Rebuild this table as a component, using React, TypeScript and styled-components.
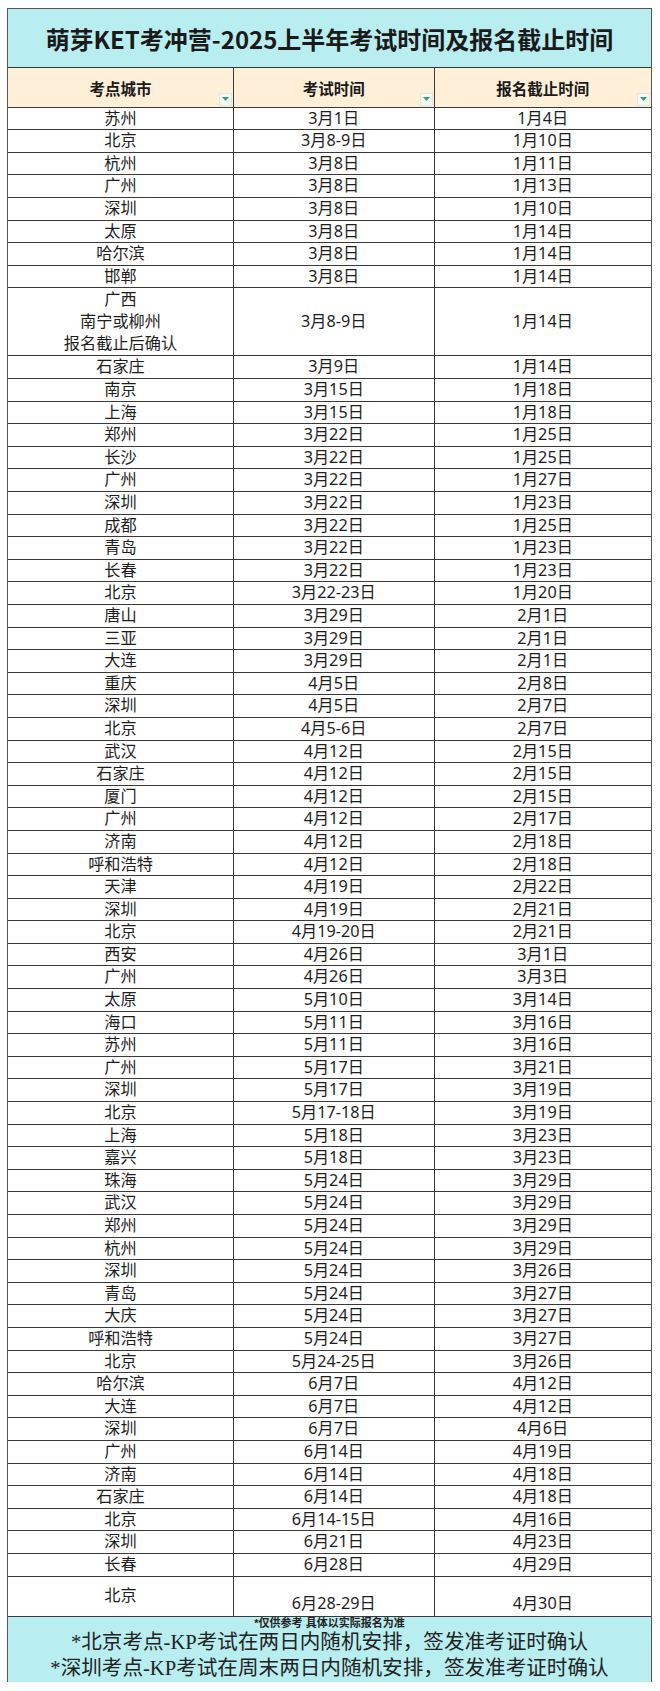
import React from "react";
import styled, { createGlobalStyle } from "styled-components";

const GlobalStyle = createGlobalStyle`
  html, body { margin: 0; padding: 0; background: #ffffff; }
  body { font-family: "Noto Sans CJK SC", "Noto Sans", sans-serif; color: #1e1e1e; }
`;

const LINE = "#3a3a3a";
const CYAN = "#b9eef0";
const PEACH = "#fdefd8";

const Sheet = styled.div`
  margin: 8px 0 0 7px;
  width: 645px;
  box-sizing: border-box;
  border-left: 1px solid #555;
  border-right: 1px solid #555;
  border-top: 1px solid #555;
`;

const TitleBar = styled.div`
  height: 58.3px;
  background: ${CYAN};
  display: flex;
  align-items: center;
  justify-content: center;
  font-size: 24px;
  font-weight: 700;
  color: #1a1a1a;
`;

const Row = styled.div<{ $h: number; $bg?: string }>`
  display: grid;
  grid-template-columns: 226px 200.5px 1fr;
  height: ${(p) => p.$h}px;
  box-sizing: border-box;
  border-top: 1px solid ${LINE};
  background: ${(p) => p.$bg ?? "#ffffff"};
`;

const Cell = styled.div<{ $align?: "center" | "end"; $last?: boolean }>`
  display: flex;
  flex-direction: column;
  align-items: center;
  justify-content: ${(p) => (p.$align === "end" ? "flex-end" : "center")};
  text-align: center;
  font-family: "Noto Sans", "Noto Sans CJK SC", sans-serif;
  font-size: 16.2px;
  line-height: 21.7px;
  color: #1e1e1e;
  border-right: ${(p) => (p.$last ? "none" : `1px solid ${LINE}`)};
  padding-bottom: ${(p) => (p.$align === "end" ? "1px" : "0")};
  white-space: nowrap;
`;

const HeadCell = styled.div<{ $last?: boolean }>`
  position: relative;
  display: flex;
  align-items: center;
  justify-content: center;
  font-size: 15.5px;
  font-weight: 700;
  color: #1a1a1a;
  border-right: ${(p) => (p.$last ? "none" : `1px solid ${LINE}`)};
  padding-top: 2px;
`;

const FilterButton = styled.span`
  position: absolute;
  right: 1px;
  bottom: 1px;
  width: 13px;
  height: 13px;
  box-sizing: border-box;
  background: #f6f6f2;
  border: 1px solid #e6e6e0;
  display: flex;
  align-items: center;
  justify-content: center;
`;

const Footer = styled.div`
  height: 66px;
  box-sizing: border-box;
  border-top: 1px solid ${LINE};
  background: ${CYAN};
  display: flex;
  flex-direction: column;
  align-items: center;
`;

const Note = styled.div`
  font-family: "Liberation Sans", "Noto Sans CJK SC", sans-serif;
  font-size: 11px;
  font-weight: 700;
  line-height: 12.5px;
  color: #222;
`;

const FootLine = styled.div`
  font-family: "Liberation Serif", "Noto Sans CJK SC", serif;
  font-size: 20.6px;
  line-height: 26px;
  color: #222;
  white-space: nowrap;
`;

type Entry = { city: string[]; exam: string; deadline: string; h?: number; bottomDates?: boolean };

const R = 22.6;

const data: Entry[] = [
  { city: ["苏州"], exam: "3月1日", deadline: "1月4日" },
  { city: ["北京"], exam: "3月8-9日", deadline: "1月10日" },
  { city: ["杭州"], exam: "3月8日", deadline: "1月11日" },
  { city: ["广州"], exam: "3月8日", deadline: "1月13日" },
  { city: ["深圳"], exam: "3月8日", deadline: "1月10日" },
  { city: ["太原"], exam: "3月8日", deadline: "1月14日" },
  { city: ["哈尔滨"], exam: "3月8日", deadline: "1月14日" },
  { city: ["邯郸"], exam: "3月8日", deadline: "1月14日" },
  { city: ["广西", "南宁或柳州", "报名截止后确认"], exam: "3月8-9日", deadline: "1月14日", h: 68 },
  { city: ["石家庄"], exam: "3月9日", deadline: "1月14日" },
  { city: ["南京"], exam: "3月15日", deadline: "1月18日" },
  { city: ["上海"], exam: "3月15日", deadline: "1月18日" },
  { city: ["郑州"], exam: "3月22日", deadline: "1月25日" },
  { city: ["长沙"], exam: "3月22日", deadline: "1月25日" },
  { city: ["广州"], exam: "3月22日", deadline: "1月27日" },
  { city: ["深圳"], exam: "3月22日", deadline: "1月23日" },
  { city: ["成都"], exam: "3月22日", deadline: "1月25日" },
  { city: ["青岛"], exam: "3月22日", deadline: "1月23日" },
  { city: ["长春"], exam: "3月22日", deadline: "1月23日" },
  { city: ["北京"], exam: "3月22-23日", deadline: "1月20日" },
  { city: ["唐山"], exam: "3月29日", deadline: "2月1日" },
  { city: ["三亚"], exam: "3月29日", deadline: "2月1日" },
  { city: ["大连"], exam: "3月29日", deadline: "2月1日" },
  { city: ["重庆"], exam: "4月5日", deadline: "2月8日" },
  { city: ["深圳"], exam: "4月5日", deadline: "2月7日" },
  { city: ["北京"], exam: "4月5-6日", deadline: "2月7日" },
  { city: ["武汉"], exam: "4月12日", deadline: "2月15日" },
  { city: ["石家庄"], exam: "4月12日", deadline: "2月15日" },
  { city: ["厦门"], exam: "4月12日", deadline: "2月15日" },
  { city: ["广州"], exam: "4月12日", deadline: "2月17日" },
  { city: ["济南"], exam: "4月12日", deadline: "2月18日" },
  { city: ["呼和浩特"], exam: "4月12日", deadline: "2月18日" },
  { city: ["天津"], exam: "4月19日", deadline: "2月22日" },
  { city: ["深圳"], exam: "4月19日", deadline: "2月21日" },
  { city: ["北京"], exam: "4月19-20日", deadline: "2月21日" },
  { city: ["西安"], exam: "4月26日", deadline: "3月1日" },
  { city: ["广州"], exam: "4月26日", deadline: "3月3日" },
  { city: ["太原"], exam: "5月10日", deadline: "3月14日" },
  { city: ["海口"], exam: "5月11日", deadline: "3月16日" },
  { city: ["苏州"], exam: "5月11日", deadline: "3月16日" },
  { city: ["广州"], exam: "5月17日", deadline: "3月21日" },
  { city: ["深圳"], exam: "5月17日", deadline: "3月19日" },
  { city: ["北京"], exam: "5月17-18日", deadline: "3月19日" },
  { city: ["上海"], exam: "5月18日", deadline: "3月23日" },
  { city: ["嘉兴"], exam: "5月18日", deadline: "3月23日" },
  { city: ["珠海"], exam: "5月24日", deadline: "3月29日" },
  { city: ["武汉"], exam: "5月24日", deadline: "3月29日" },
  { city: ["郑州"], exam: "5月24日", deadline: "3月29日" },
  { city: ["杭州"], exam: "5月24日", deadline: "3月29日" },
  { city: ["深圳"], exam: "5月24日", deadline: "3月26日" },
  { city: ["青岛"], exam: "5月24日", deadline: "3月27日" },
  { city: ["大庆"], exam: "5月24日", deadline: "3月27日" },
  { city: ["呼和浩特"], exam: "5月24日", deadline: "3月27日" },
  { city: ["北京"], exam: "5月24-25日", deadline: "3月26日" },
  { city: ["哈尔滨"], exam: "6月7日", deadline: "4月12日" },
  { city: ["大连"], exam: "6月7日", deadline: "4月12日" },
  { city: ["深圳"], exam: "6月7日", deadline: "4月6日" },
  { city: ["广州"], exam: "6月14日", deadline: "4月19日" },
  { city: ["济南"], exam: "6月14日", deadline: "4月18日" },
  { city: ["石家庄"], exam: "6月14日", deadline: "4月18日" },
  { city: ["北京"], exam: "6月14-15日", deadline: "4月16日" },
  { city: ["深圳"], exam: "6月21日", deadline: "4月23日" },
  { city: ["长春"], exam: "6月28日", deadline: "4月29日" },
  { city: ["北京"], exam: "6月28-29日", deadline: "4月30日", h: 40.3, bottomDates: true },
];

const Triangle = () => (
  <svg width="7" height="4" viewBox="0 0 7 4">
    <polygon points="0,0 7,0 3.5,4" fill="#2aa37c" />
  </svg>
);

const headers = ["考点城市", "考试时间", "报名截止时间"];

export default function App() {
  return (
    <>
      <GlobalStyle />
      <Sheet>
        <TitleBar>萌芽KET考冲营-2025上半年考试时间及报名截止时间</TitleBar>
        <Row $h={39.4} $bg={PEACH}>
          {headers.map((h, i) => (
            <HeadCell key={h} $last={i === 2}>
              {h}
              <FilterButton>
                <Triangle />
              </FilterButton>
            </HeadCell>
          ))}
        </Row>
        {data.map((d, i) => (
          <Row key={i} $h={d.h ?? R}>
            <Cell>
              {d.city.map((c) => (
                <span key={c}>{c}</span>
              ))}
            </Cell>
            <Cell $align={d.bottomDates ? "end" : "center"}>{d.exam}</Cell>
            <Cell $align={d.bottomDates ? "end" : "center"} $last>
              {d.deadline}
            </Cell>
          </Row>
        ))}
        <Footer>
          <Note>*仅供参考 具体以实际报名为准</Note>
          <FootLine>*北京考点-KP考试在两日内随机安排，签发准考证时确认</FootLine>
          <FootLine>*深圳考点-KP考试在周末两日内随机安排，签发准考证时确认</FootLine>
        </Footer>
      </Sheet>
    </>
  );
}
